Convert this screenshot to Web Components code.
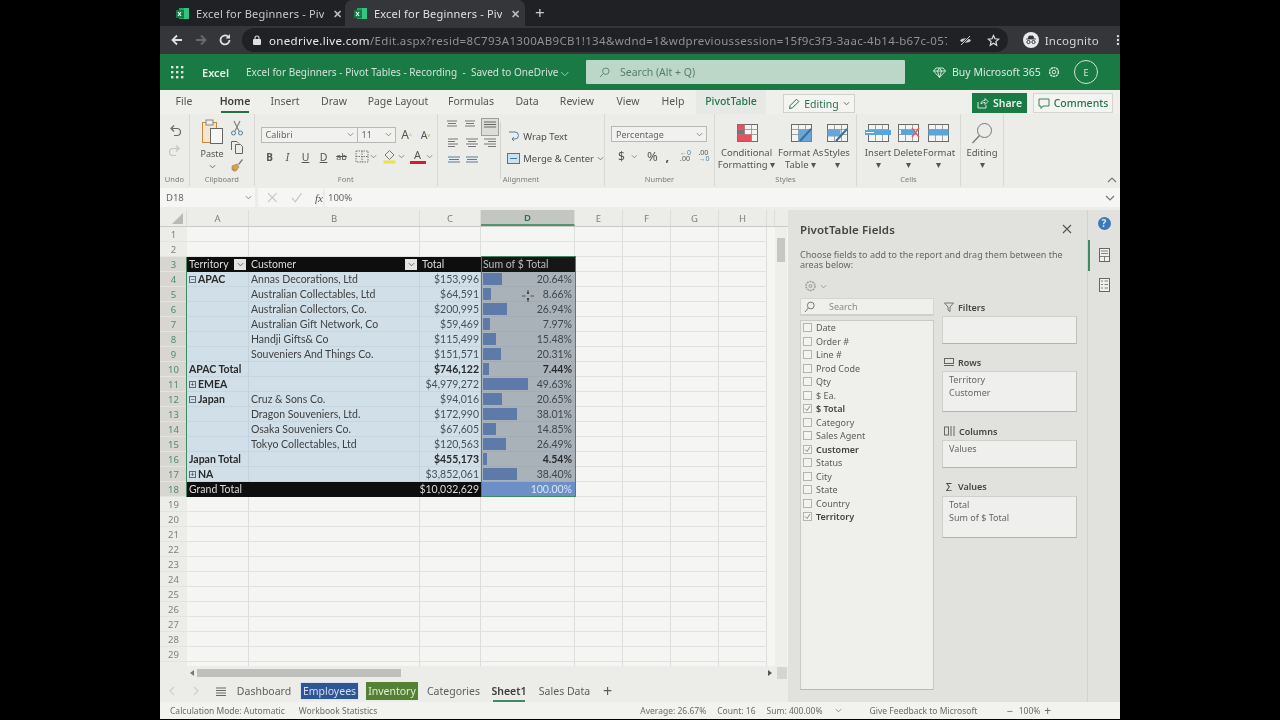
<!DOCTYPE html>
<html>
<head>
<meta charset="utf-8">
<title>Excel for Beginners - Pivot Tables</title>
<style>
  html, body { margin: 0; height: 100%; background: #000; overflow: hidden; }
  body { display: flex; justify-content: center; font-family: "Noto Sans", sans-serif; }
  #app { width: 960px; height: 719px; display: flex; flex-direction: column; background: #ecece9; filter: blur(.35px); }
  #main { display: flex; height: 492px; }
  #left { width: 628px; display: flex; flex-direction: column; }
</style>
</head>
<body>
<div id="app">
  <chrome-tabs></chrome-tabs>
  <chrome-toolbar></chrome-toolbar>
  <app-header></app-header>
  <ribbon-tabs></ribbon-tabs>
  <excel-ribbon></excel-ribbon>
  <formula-bar></formula-bar>
  <div id="main">
    <div id="left">
      <sheet-grid></sheet-grid>
      <sheet-tabs></sheet-tabs>
    </div>
    <pivot-panel></pivot-panel>
  </div>
  <status-bar></status-bar>
</div>
<script>
// shared icons
const favicon = `<svg width="13" height="13" viewBox="0 0 13 13"><rect x="3" y="1" width="10" height="11" fill="#21a366"/><rect x="8" y="1" width="5" height="11" fill="#33c481"/><rect x="0" y="3" width="8" height="8" fill="#107c41"/><path d="M2 5l3 4M5 5l-3 4" stroke="#fff" stroke-width="1.1"/></svg>`;
const chev = (c = "#777", s = 7) => `<svg width="${s}" height="${s}" viewBox="0 0 8 8"><path d="M1 2.5l3 3 3-3" fill="none" stroke="${c}" stroke-width="1.1"/></svg>`;
const lines = (arr, c = "#777") => `<svg width="14" height="12" viewBox="0 0 14 12">${arr.map((l, i) => `<path d="M${l[0]} ${1 + i * 2.5}H${l[1]}" stroke="${c}" stroke-width="1"/>`).join("")}</svg>`;
const tableIcon = (extra) => `<svg width="26" height="22" viewBox="0 0 26 22"><rect x="3.5" y="2.5" width="20" height="17" fill="#f4f4f2" stroke="#6b6b6b"/><path d="M3.5 7.5h20M3.5 12.5h20M10.5 2.5v17M17.5 2.5v17" stroke="#8d8d8d" stroke-width=".8"/>${extra}</svg>`;

class UiElement extends HTMLElement {
  connectedCallback() {
    if (this.shadowRoot) return;
    this.attachShadow({ mode: "open" });
    this.shadowRoot.innerHTML = `<style>${this.css()}</style>${this.html()}`;
  }
}

class ChromeTabs extends UiElement {
  css() {
    return `:host { display: flex; height: 26px; background: #202124; color: #c8c9cb; font-size: 11px; align-items: stretch; padding-left: 7px; flex: none; }
    .tab { width: 178px; display: flex; align-items: center; padding-left: 9px; box-sizing: border-box; gap: 7px; }
    .tab.on { background: #35363a; border-radius: 7px 7px 0 0; color: #dfe0e2; width: 180px; }
    .t { width: 128px; overflow: hidden; white-space: nowrap; letter-spacing: .2px; }
    .x { font-size: 11px; width: 12px; text-align: center; font-weight: 700; color: #bbb; }
    .plus { font-size: 17px; color: #c8c9cb; padding-left: 10px; line-height: 25px; }`;
  }
  html() {
    return `<div class="tab">${favicon}<span class="t">Excel for Beginners - Pivot</span><span class="x">✕</span></div>
    <div class="tab on">${favicon}<span class="t">Excel for Beginners - Pivot</span><span class="x">✕</span></div>
    <div class="plus">+</div>`;
  }
}

class ChromeToolbar extends UiElement {
  css() {
    return `:host { display: flex; height: 28px; background: #35363a; align-items: center; flex: none; position: relative; }
    .nav { width: 88px; display: flex; align-items: center; padding-left: 10px; box-sizing: border-box; gap: 10px; flex: none; }
    .omni { width: 780px; height: 24px; background: #202124; border-radius: 12px; display: flex; align-items: center; font-size: 11.5px; color: #8f9296; margin-left: -6px; padding-left: 11px; box-sizing: border-box; white-space: nowrap; letter-spacing: .33px; }
    .omni b { font-weight: 400; color: #e8e9ea; }
    .url { width: 678px; overflow: hidden; margin-left: 8px; }
    .end { display: flex; gap: 15px; margin-left: 12px; align-items: center; }
    .inc { display: flex; align-items: center; gap: 6px; color: #d5d6d8; font-size: 11.5px; margin-left: 15px; letter-spacing: .3px; }
    .dots { margin-left: 17px; }`;
  }
  html() {
    return `<div class="nav">
      <svg width="14" height="14" viewBox="0 0 14 14"><path d="M12 7H3M7 2.5L2.5 7 7 11.5" fill="none" stroke="#dfe0e2" stroke-width="1.8"/></svg>
      <svg width="14" height="14" viewBox="0 0 14 14"><path d="M2 7h9M7 2.5L11.5 7 7 11.5" fill="none" stroke="#6a6b6e" stroke-width="1.8"/></svg>
      <svg width="14" height="14" viewBox="0 0 14 14"><path d="M11.5 7A4.5 4.5 0 1 1 10 3.6" fill="none" stroke="#dfe0e2" stroke-width="1.8"/><path d="M12 1v4.5H7.5z" fill="#dfe0e2"/></svg>
    </div>
    <div class="omni">
      <svg width="8" height="10" viewBox="0 0 8 10"><rect y="4" width="8" height="6" rx="1" fill="#dfe0e2"/><path d="M2 4V3a2 2 0 0 1 4 0v1" fill="none" stroke="#dfe0e2" stroke-width="1.1"/></svg>
      <span class="url"><b>onedrive.live.com</b>/Edit.aspx?resid=8C793A1300AB9CB1!134&amp;wdnd=1&amp;wdprevioussession=15f9c3f3-3aac-4b14-b67c-057a2...</span>
      <span class="end">
        <svg width="13" height="13" viewBox="0 0 13 13"><path d="M1 6.5C3 3.5 10 3.5 12 6.5 10 9.5 3 9.5 1 6.5z" fill="#c8c9cb"/><path d="M2 11L11 2" stroke="#202124" stroke-width="2.4"/><path d="M2 11L11 2" stroke="#c8c9cb" stroke-width="1"/></svg>
        <svg width="13" height="13" viewBox="0 0 13 13"><path d="M6.5 1.5l1.5 3.3 3.6.4-2.7 2.4.8 3.6-3.2-1.9-3.2 1.9.8-3.6-2.7-2.4 3.6-.4z" fill="none" stroke="#dfe0e2" stroke-width="1.2"/></svg>
      </span>
    </div>
    <div class="inc">
      <svg width="16" height="16" viewBox="0 0 16 16"><circle cx="8" cy="8" r="8" fill="#e8e9ea"/><path d="M3 7h10M5 7l1-3h4l1 3" fill="#35363a" stroke="#35363a" stroke-width=".8"/><circle cx="5.5" cy="10" r="1.6" fill="none" stroke="#35363a"/><circle cx="10.5" cy="10" r="1.6" fill="none" stroke="#35363a"/></svg>
      Incognito
    </div>
    <svg class="dots" width="4" height="12" viewBox="0 0 4 12"><circle cx="2" cy="2" r="1.2" fill="#dfe0e2"/><circle cx="2" cy="6" r="1.2" fill="#dfe0e2"/><circle cx="2" cy="10" r="1.2" fill="#dfe0e2"/></svg>`;
  }
}

class AppHeader extends UiElement {
  css() {
    return `:host { display: flex; height: 36px; background: #1a7a43; color: #d4e7da; align-items: center; flex: none; font-size: 10px; white-space: nowrap; }
    .w { margin-left: 11px; width: 13px; height: 13px; }
    .app { font-size: 11px; font-weight: 600; margin-left: 18px; width: 44px; color: #e4f0e8; }
    .doc { width: 340px; letter-spacing: .02px; color: #cfe4d6; }
    .search { width: 319px; height: 24px; background: #bcd7c7; display: flex; align-items: center; color: #577f68; font-size: 10.5px; box-sizing: border-box; padding-left: 13px; gap: 10px; border-radius: 1px; }
    .buy { margin-left: 28px; display: flex; align-items: center; gap: 6px; width: 115px; color: #d9eadf; font-size: 10.5px; }
    .e { width: 22px; height: 22px; border: 1px solid #cfe4d6; border-radius: 50%; display: flex; align-items: center; justify-content: center; margin-left: 14px; font-size: 9px; }`;
  }
  html() {
    let dots = "";
    for (let y = 0; y < 3; y++) for (let x = 0; x < 3; x++) dots += `<rect x="${x * 5}" y="${y * 5}" width="2.4" height="2.4" fill="#d4e7da"/>`;
    return `<svg class="w" viewBox="0 0 13 13">${dots}</svg>
    <span class="app">Excel</span>
    <span class="doc">Excel for Beginners - Pivot Tables - Recording&nbsp; - &nbsp;Saved to OneDrive ⌵</span>
    <div class="search"><svg width="11" height="11" viewBox="0 0 11 11"><circle cx="6.8" cy="4.2" r="3.2" fill="none" stroke="#5f8a72"/><path d="M4.4 6.6L1 10" stroke="#5f8a72"/></svg>Search (Alt + Q)</div>
    <div class="buy"><svg width="13" height="11" viewBox="0 0 13 11"><path d="M3 1h7l2.5 3-6 6.5L.5 4zM.5 4h12M4.5 4L6.5 10.5 8.5 4 6.5 1 4.5 4" fill="none" stroke="#e0efe5" stroke-width=".9"/></svg>Buy Microsoft 365</div>
    <svg width="12" height="12" viewBox="0 0 12 12"><circle cx="6" cy="6" r="4.4" fill="none" stroke="#d4e7da" stroke-width="1.4" stroke-dasharray="2.2 .6"/><circle cx="6" cy="6" r="1.8" fill="none" stroke="#d4e7da"/></svg>
    <div class="e">E</div>`;
  }
}

class RibbonTabs extends UiElement {
  css() {
    return `:host { display: flex; height: 24px; background: #efefec; align-items: stretch; flex: none; font-size: 10.5px; color: #555; position: relative; white-space: nowrap; }
    .t { display: flex; align-items: center; justify-content: center; box-sizing: border-box; padding-bottom: 2px; position: relative; }
    .on { font-weight: 600; color: #3d3d3d; }
    .on::after { content: ""; position: absolute; left: 13px; right: 13px; bottom: 1px; height: 2px; background: #217346; }
    .pv { color: #26734a; background: #e6e9e5; font-weight: 500; }
    .edit { width: 72px; height: 19px; margin: 4px 0 0 17px; border: 1px solid #cfcfcc; background: #f4f4f2; box-sizing: border-box; display: flex; align-items: center; justify-content: center; gap: 4px; font-size: 10.5px; color: #26734a; }
    .share { width: 55px; height: 20px; margin: 3px 0 0 117px; background: #1a7a43; color: #e7f2ea; display: flex; align-items: center; justify-content: center; gap: 4px; font-weight: 600; }
    .com { width: 80px; height: 20px; margin: 3px 0 0 6px; border: 1px solid #d4d4d0; background: #f4f4f2; box-sizing: border-box; display: flex; align-items: center; justify-content: center; gap: 4px; color: #26734a; font-weight: 500; }`;
  }
  html() {
    const tabs = [["File", 48], ["Home", 54], ["Insert", 46], ["Draw", 52], ["Page Layout", 76], ["Formulas", 70], ["Data", 42], ["Review", 58], ["View", 44], ["Help", 46], ["PivotTable", 70]];
    return tabs.map(([t, w]) => `<div class="t ${t == "Home" ? "on" : ""} ${t == "PivotTable" ? "pv" : ""}" style="width:${w}px">${t}</div>`).join("") +
      `<div class="edit"><svg width="12" height="12" viewBox="0 0 12 12"><path d="M1.5 10.5l.7-3L8.5 1.2l2.3 2.3L4.5 9.8z" fill="none" stroke="#26734a"/></svg>Editing ${chev("#666")}</div>
      <div class="share"><svg width="12" height="12" viewBox="0 0 12 12"><path d="M1 5v6h8V8M4 7c0-3 2-3.500 4-3.500V1.500L11 4.500 8 7.500V5.500C6 5.500 5 6 4 7z" fill="none" stroke="#e7f2ea" stroke-width=".9"/></svg>Share</div>
      <div class="com"><svg width="12" height="11" viewBox="0 0 12 11"><path d="M1 1h10v7H5L3 10.500V8H1z" fill="none" stroke="#26734a" stroke-width=".9"/></svg>Comments</div>`;
  }
}

class RibbonGroup extends UiElement {
  css() {
    return `:host { display: flex; flex-direction: column; height: 72px; border-right: 1px solid #d8d8d5; box-sizing: border-box; flex: none; }
    .c { height: 60px; flex: none; }
    .l { text-align: center; font-size: 7.5px; line-height: 10px; color: #7b7b7b; padding-top: 0; }`;
  }
  html() {
    return `<div class="c"><slot></slot></div><div class="l">${this.getAttribute("label")}</div>`;
  }
}

class ExcelRibbon extends UiElement {
  css() {
    return `:host { display: flex; height: 72px; background: #ecece9; flex: none; position: relative; font-size: 9px; color: #555; white-space: nowrap; }
    ribbon-group { display: flex; }
    .col { display: flex; flex-direction: column; align-items: center; }
    .undo { gap: 6px; padding-top: 10px; }
    .clip { display: flex; padding: 5px 0 0 11px; gap: 7px; }
    .paste { width: 22px; font-size: 9px; }
    .paste span { margin: 3px 0 3px; }
    .clipb { gap: 4px; padding-top: 1px; }
    .font { padding: 12px 0 0 6px; display: flex; flex-direction: column; gap: 6px; }
    .r { display: flex; align-items: center; }
    .sel { height: 16px; border: 1px solid #b8b8b5; background: #f1f1ef; display: flex; align-items: center; justify-content: space-between; padding: 0 3px 0 4px; box-sizing: border-box; font-size: 9px; color: #666; }
    .g { width: 18px; text-align: center; font-size: 10.5px; color: #555; display: flex; align-items: center; justify-content: center; }
    .al { display: flex; padding: 4px 0 0 7px; }
    .algrid { display: grid; grid-template-columns: 18px 18px 18px; grid-auto-rows: 18px; place-items: center; width: 58px; }
    .algrid .box { border: 1px solid #9d9d9a; background: #dcdcd9; width: 18px; height: 18px; box-sizing: border-box; display: flex; align-items: center; justify-content: center; }
    .wm { border-left: 1px solid #d2d2cf; height: 50px; margin-top: 4px; padding: 7px 0 0 6px; font-size: 9.5px; display: flex; flex-direction: column; gap: 8px; color: #4d4d4d; }
    .wm .r { gap: 3px; height: 14px; }
    .num { padding: 12px 0 0 6px; display: flex; flex-direction: column; gap: 5px; }
    .big { width: 0; flex: 1; line-height: 12px; text-align: center; padding-top: 8px; font-size: 9.5px; }
    .bigs { display: flex; height: 100%; }
    .ic { height: 22px; display: flex; justify-content: center; margin-bottom: 3px; }
    .big small { font-size: 9px; display: block; }
    .up { position: absolute; right: 3px; bottom: 2px; }`;
  }
  html() {
    const clipI = `<svg width="22" height="25" viewBox="0 0 22 25"><rect x="1.500" y="3.500" width="14" height="20" fill="#f6e6cf" stroke="#c78a3c"/><rect x="5" y="1" width="7" height="5" fill="#eee" stroke="#888"/><rect x="9.500" y="9.500" width="12" height="15" fill="#f6f6f4" stroke="#666"/></svg>`;
    const b = (t, st = "") => `<span class="g" style="${st}">${t}</span>`;
    const a = [[[0, 10], [1, 9], [0, 10]], [[1, 9], [0, 10], [2, 8]], [[1, 11], [0, 12], [1, 11]]];
    const bars = { l: [[1, 11], [1, 8], [1, 11], [1, 8]], c: [[1, 13], [3, 11], [1, 13], [3, 11]], r: [[1, 13], [5, 13], [1, 13], [5, 13]], t: [[1, 13], [2, 12], [1, 13]] };
    return `<ribbon-group label="Undo" style="width:30px"><div class="col undo">
        <svg width="14" height="14" viewBox="0 0 14 14"><path d="M4 4.500h5a3.500 3.500 0 0 1 0 7H6M6 1.500L3 4.500l3 3" fill="none" stroke="#666" stroke-width="1.200"/></svg>
        <svg width="14" height="14" viewBox="0 0 14 14"><path d="M10 4.500H5a3.500 3.500 0 0 0 0 7h3M8 1.500l3 3-3 3" fill="none" stroke="#c3c3c0" stroke-width="1.200"/></svg>
      </div></ribbon-group>
      <ribbon-group label="Clipboard" style="width:64.500px"><div class="clip">
        <div class="col paste">${clipI}<span>Paste</span>${chev("#666")}</div>
        <div class="col clipb">
          <svg width="14" height="16" viewBox="0 0 14 16"><path d="M4 1l5 10M10 1L5 11" stroke="#7a7a78" stroke-width="1.100"/><circle cx="3.500" cy="13" r="2" fill="none" stroke="#4e7ea6"/><circle cx="10.500" cy="13" r="2" fill="none" stroke="#4e7ea6"/></svg>
          <svg width="14" height="14" viewBox="0 0 14 14"><path d="M1.500 10V1.500H7L9 3.500M5.500 4.500h5l2 2v7h-7z" fill="none" stroke="#666"/></svg>
          <svg width="14" height="14" viewBox="0 0 14 14"><path d="M8 6l4-5 1 1-4 5z" fill="#7a7a78"/><path d="M2 8l5-2 2 3-3 4H3l1-2-2 1z" fill="#d9a04e" stroke="#8a6a30" stroke-width=".5"/></svg>
        </div>
      </div></ribbon-group>
      <ribbon-group label="Font" style="width:183.500px"><div class="font">
        <div class="r">
          <div class="sel" style="width:97px">Calibri ${chev("#888")}</div>
          <div class="sel" style="width:38px;border-left:0">11 ${chev("#888")}</div>
          <span class="g" style="width:20px;margin-left:1px;font-size:12px">A<sup style="font-size:5px;color:#c49a3a">^</sup></span>
          <span class="g" style="width:18px;font-size:10.5px">A<sup style="font-size:5px;color:#c49a3a">v</sup></span>
        </div>
        <div class="r" style="margin-left:0">
          ${b("B", "font-weight:700;font-size:10px")}${b("I", "font-style:italic")}${b("U", "text-decoration:underline")}${b("D", "text-decoration:underline")}${b("ab", "text-decoration:line-through;font-size:9px")}
          <svg width="14" height="13" viewBox="0 0 14 13" style="margin:0 1px 0 4px"><rect x="1" y="1" width="12" height="11" fill="none" stroke="#777" stroke-dasharray="1.500 1"/><path d="M1 6.500h12M7 1v11" stroke="#777" stroke-dasharray="1.500 1"/></svg>${chev("#888")}
          <svg width="15" height="15" viewBox="0 0 15 15" style="margin:0 1px 0 5px"><path d="M7.500 1.500l4.500 4.500-4.500 4.500L3 6z" fill="none" stroke="#777"/><rect x="1.500" y="11.500" width="12" height="3" fill="#e8e24f"/></svg>${chev("#888")}
          <span class="g" style="width:16px;margin-left:5px;height:15px;border-bottom:3px solid #d0202a;line-height:12px;box-sizing:border-box;font-size:11px;color:#555">A</span>${chev("#888")}
        </div>
      </div></ribbon-group>
      <ribbon-group label="Alignment" style="width:167px"><div class="al">
        <div class="algrid">
          <span>${lines(a[0])}</span><span>${lines(a[0])}</span><span class="box">${lines([[1, 13], [1, 13], [1, 13]].slice(0, 3), "#666")}</span>
          <span>${lines(bars.l)}</span><span>${lines(bars.c)}</span><span>${lines(bars.r)}</span>
          <span>${lines(bars.t, "#4e7ea6")}</span><span>${lines(bars.t, "#4e7ea6")}</span>
        </div>
        <div class="wm">
          <div class="r"><svg width="13" height="14" viewBox="0 0 13 14"><path d="M2 3h6a3 3 0 0 1 0 7H5M7 8L5 10l2 2" fill="none" stroke="#4e7ea6"/></svg>Wrap Text</div>
          <div class="r"><svg width="13" height="13" viewBox="0 0 13 13"><rect x=".5" y="1.500" width="12" height="10" fill="#cfe0ee" stroke="#3a7ca8"/><path d="M3 6.500h7" stroke="#3a7ca8"/></svg>Merge &amp; Center ${chev("#777")}</div>
        </div>
      </div></ribbon-group>
      <ribbon-group label="Number" style="width:110px"><div class="num">
        <div class="sel" style="width:96px">Percentage ${chev("#888")}</div>
        <div class="r" style="padding-left:7px;font-size:12px;color:#555;gap:0">
          <span style="width:13px">$</span>${chev("#888")}<span style="width:27px;text-align:center;font-size:13px;margin-left:2px">%</span><span style="width:15px;font-weight:700;font-size:13px">,</span>
          <span style="width:19px;font-size:7px;color:#4e7ea6;line-height:6px">←0<br><span style="color:#555">.00</span></span><span style="width:16px;font-size:7px;color:#4e7ea6;line-height:6px"><span style="color:#555">.00</span><br>→0</span>
        </div>
      </div></ribbon-group>
      <ribbon-group label="Styles" style="width:142px"><div class="bigs">
        <div class="big" style="flex:0 0 63px"><div class="ic">${tableIcon('<rect x="3.500" y="2.500" width="7" height="5" fill="#e6505f"/><rect x="3.500" y="7.500" width="7" height="5" fill="#777"/><rect x="3.500" y="12.500" width="14" height="7" fill="#e6505f"/>')}</div>Conditional<br>Formatting ▾</div>
        <div class="big" style="flex:0 0 45px"><div class="ic">${tableIcon('<rect x="10.500" y="7.500" width="13" height="12" fill="#6aa5d6"/><path d="M12 19L23 7" stroke="#3a6f9c" stroke-width="2"/>')}</div>Format As<br>Table ▾</div>
        <div class="big" style="flex:0 0 28px"><div class="ic">${tableIcon('<rect x="3.500" y="7.500" width="13" height="7" fill="#6aa5d6"/><path d="M12 19L23 7" stroke="#3a6f9c" stroke-width="2"/>')}</div>Styles<br>▾</div>
      </div></ribbon-group>
      <ribbon-group label="Cells" style="width:104px"><div class="bigs" style="padding-left:6px">
        <div class="big" style="flex:0 0 30px"><div class="ic">${tableIcon('<rect x="0" y="8" width="26" height="5" fill="#58a6dc"/><path d="M1 10.500h8" stroke="#fff"/>')}</div>Insert<br>▾</div>
        <div class="big" style="flex:0 0 30px"><div class="ic">${tableIcon('<rect x="6" y="8" width="14" height="5" fill="#58a6dc"/><path d="M17 6l7 9M24 6l-7 9" stroke="#e0606a" stroke-width="1.500"/>')}</div>Delete<br>▾</div>
        <div class="big" style="flex:0 0 30px"><div class="ic">${tableIcon('<rect x="3.500" y="7.500" width="20" height="6" fill="#58a6dc"/>')}</div>Format<br>▾</div>
      </div></ribbon-group>
      <ribbon-group label="" style="width:43px"><div class="bigs">
        <div class="big"><div class="ic"><svg width="24" height="23" viewBox="0 0 24 23"><circle cx="14.500" cy="8.500" r="7" fill="none" stroke="#777"/><path d="M9.500 13.500L2.500 21" stroke="#777" stroke-width="1.300"/></svg></div>Editing<br>▾</div>
      </div></ribbon-group>
      <svg class="up" width="10" height="8" viewBox="0 0 10 8"><path d="M1 6l4-4 4 4" fill="none" stroke="#777" stroke-width="1.200"/></svg>`;
  }
}

class FormulaBar extends UiElement {
  css() {
    return `:host { display: flex; height: 19px; margin: 2px 0 3px; background: #f6f6f4; align-items: center; font-size: 9.5px; color: #666; flex: none; position: relative; }
    .name { width: 95px; height: 19px; display: flex; align-items: center; justify-content: space-between; padding: 0 3px 0 6px; box-sizing: border-box; }
    .btns { width: 70px; display: flex; align-items: center; gap: 13px; padding-left: 9px; box-sizing: border-box; color: #bdbdba; border-left: 3px solid #ecece9; height: 19px; border-right: 2px solid #ecece9; }
    .v { margin-left: 3px; flex: 1; }
    .dn { margin-right: 5px; }`;
  }
  html() {
    return `<div class="name">D18 ${chev("#888")}</div>
    <div class="btns">
      <svg width="11" height="11" viewBox="0 0 11 11"><path d="M1 1l9 9M10 1l-9 9" stroke="#c5c5c2" stroke-width="1.200"/></svg>
      <svg width="12" height="11" viewBox="0 0 12 11"><path d="M1 6l3.500 4L11 1" fill="none" stroke="#c5c5c2" stroke-width="1.200"/></svg>
      <span style="font-family:'Liberation Serif',serif;font-style:italic;color:#555;font-size:11px">fx</span>
    </div>
    <div class="v">100%</div>
    <svg class="dn" width="10" height="8" viewBox="0 0 10 8"><path d="M1 2l4 4 4-4" fill="none" stroke="#777" stroke-width="1.200"/></svg>`;
  }
}

const DATA = {
  3: { a: "Territory", f: 1, b: "Customer", c: "Total", d: "Sum of $ Total", head: 1 },
  4: { a: "APAC", t: "m", b: "Annas Decorations, Ltd", c: "$153,996", d: "20.64%", w: 19 },
  5: { b: "Australian Collectables, Ltd", c: "$64,591", d: "8.66%", w: 8 },
  6: { b: "Australian Collectors, Co.", c: "$200,995", d: "26.94%", w: 24 },
  7: { b: "Australian Gift Network, Co", c: "$59,469", d: "7.97%", w: 7 },
  8: { b: "Handji Gifts& Co", c: "$115,499", d: "15.48%", w: 13 },
  9: { b: "Souveniers And Things Co.", c: "$151,571", d: "20.31%", w: 18 },
  10: { a: "APAC Total", bold: 1, c: "$746,122", d: "7.44%", w: 6 },
  11: { a: "EMEA", t: "p", c: "$4,979,272", d: "49.63%", w: 45 },
  12: { a: "Japan", t: "m", b: "Cruz & Sons Co.", c: "$94,016", d: "20.65%", w: 19 },
  13: { b: "Dragon Souveniers, Ltd.", c: "$172,990", d: "38.01%", w: 34 },
  14: { b: "Osaka Souveniers Co.", c: "$67,605", d: "14.85%", w: 13 },
  15: { b: "Tokyo Collectables, Ltd", c: "$120,563", d: "26.49%", w: 23 },
  16: { a: "Japan Total", bold: 1, c: "$455,173", d: "4.54%", w: 4 },
  17: { a: "NA", t: "p", c: "$3,852,061", d: "38.40%", w: 34 },
  18: { a: "Grand Total", c: "$10,032,629", d: "100.00%", total: 1 }
};

class SheetGrid extends UiElement {
  css() {
    const cols = "27px 62px 171px 61px 94px 48px 48px 48px 48px 8px";
    return `:host { display: flex; flex-direction: column; height: 470px; position: relative; flex: none; background: #ecece9; font-size: 9.5px; color: #7d7d7d; }
    .hdr { display: grid; grid-template-columns: ${cols}; height: 17px; flex: none; background: #ecece9; border-bottom: 1px solid #c9c9c6; box-sizing: border-box; }
    .hdr div { display: flex; align-items: center; justify-content: center; padding-top: 0; border-right: 1px solid #dcdcd9; box-sizing: border-box; }
    .hdr .sel { background: #c4c6c1; border-bottom: 2px solid #53936f; color: #31704c; font-weight: 600; height: 16px; }
    .body { height: 439px; overflow: hidden; background: #f5f5f3; }
    .row { display: grid; grid-template-columns: ${cols}; height: 15px; font-family: Lato, sans-serif; font-size: 10.5px; color: #3f3f3f; white-space: nowrap; }
    .row > div { border-right: 1px solid #dedede; border-bottom: 1px solid #e1e1de; box-sizing: border-box; display: flex; align-items: center; overflow: visible; min-width: 0; padding: 0 2px; }
    .row .rh { background: #ecece9; color: #808080; justify-content: center; font-size: 9.5px; font-family: "Noto Sans", sans-serif; border-right: 0; border-bottom-color: #e3e3e0; padding: 0; }
    .row.inpv .rh { background: #d8d6d0; color: #4f8b68; }
    .row .blank { border-color: transparent; }
    .pv { background: #d1dfe9; border-bottom-color: #c7d5df !important; border-right-color: #c3d2dc !important; }
    .row .c { justify-content: flex-end; color: #45505a; padding-right: 1px; }
    .row .d { background: #a9b2b9; justify-content: flex-end; position: relative; border-right-color: #a9b2b9 !important; border-bottom-color: #a3acb3 !important; color: #3f464c; }
    .bar { position: absolute; left: 2px; top: 1px; bottom: 1px; background: #5d7aa8; }
    .d span { position: relative; }
    .bold { font-weight: 700; color: #2a2a2a !important; }
    .blk, .row .blk { background: #0e0e0e !important; color: #dcdcdc !important; border-color: #0e0e0e !important; }
    .row .d.tot { background: #6c8fc8 !important; color: #d9e6f7 !important; border-color: #6c8fc8 !important; }
    .row .d.hd { background: #161616 !important; color: #b9bbbb !important; border-color: #161616 !important; justify-content: flex-start; }
    .a2 { padding-left: 2px; }
    .fb { margin-left: auto; width: 12px; height: 11px; background: #e4e4e2; flex: none; display: flex; align-items: center; justify-content: center; margin-right: 0; }
    .tg { width: 7px; height: 7px; border: 1px solid #5a6a76; box-sizing: border-box; margin: 0 2px 0 0; font: 400 7px/5px "Liberation Sans", sans-serif; text-align: center; color: #333; flex: none; }
    .hscroll { height: 14px; display: flex; align-items: center; background: #ecece9; position: relative; flex: none; }
    .thumb { width: 204px; height: 8px; background: #bfbfbc; margin-left: 3px; }
    .hscroll .lft { margin-left: 30px; }
    .hscroll .rgt { margin-left: auto; margin-right: 5px; }
    .sq { width: 10px; height: 12px; background: #d5d5d2; margin-right: 1px; }
    .vs { position: absolute; left: 615px; top: 17px; width: 12px; height: 439px; background: #eeeeeb; display: flex; flex-direction: column; align-items: center; }
    .vs i { display: block; width: 8px; height: 24px; background: #c6c6c3; margin-top: 11px; }
    .frame { position: absolute; border: 1.5px solid #3f8a62; box-sizing: border-box; pointer-events: none; }
    .corner { position: absolute; left: 12px; top: 3px; width: 0; height: 0; border-left: 11px solid transparent; border-bottom: 11px solid #b9b9b6; }
    .cursor { position: absolute; left: 361px; top: 79px; }`;
  }
  html() {
    const heads = ["", "A", "B", "C", "D", "E", "F", "G", "H", ""];
    const toggle = (t) => `<span class="tg">${t == "m" ? "−" : "+"}</span>`;
    const filter = `<span class="fb">${chev("#666")}</span>`;
    let rows = "";
    for (let n = 1; n <= 30; n++) {
      const r = DATA[n];
      const tail = `<div class="blank"></div>`.repeat(0) + `<div></div><div></div><div></div><div></div><div class="blank"></div>`;
      if (!r) {
        rows += `<div class="row"><div class="rh">${n}</div><div></div><div></div><div></div><div></div>${tail}</div>`;
        continue;
      }
      const blk = r.head || r.total ? "blk" : "pv";
      const bold = r.bold || r.t ? "bold" : "";
      const dClass = r.head ? "hd" : r.total ? "tot" : "";
      rows += `<div class="row inpv"><div class="rh">${n}</div>
        <div class="${blk} ${bold} a2">${r.t ? toggle(r.t) : ""}${r.a || ""}${r.f ? filter : ""}</div>
        <div class="${blk}"><span>${(r.b || "").replace("&", "&amp;")}</span>${r.head ? filter : ""}</div>
        <div class="${blk} c ${r.bold ? "bold" : ""}" style="${r.head ? "justify-content:flex-start;padding-left:2px" : ""}">${r.c}</div>
        <div class="d ${dClass} ${r.bold ? "bold" : ""}">${r.w ? `<i class="bar" style="width:${r.w}px"></i>` : ""}<span>${r.d}</span></div>
        ${tail}</div>`;
    }
    return `<div class="hdr">${heads.map((h) => `<div class="${h == "D" ? "sel" : ""}">${h}</div>`).join("")}</div>
    <div class="corner"></div>
    <div class="body">${rows}</div>
    <div class="hscroll"><svg class="lft" width="4" height="6" viewBox="0 0 4 6"><path d="M4 0L0 3l4 3z" fill="#777"/></svg><span class="thumb"></span><svg class="rgt" width="4" height="6" viewBox="0 0 4 6"><path d="M0 0l4 3-4 3z" fill="#555"/></svg><span class="sq"></span></div>
    <div class="vs"><i></i></div>
    <div class="frame" style="left:26px;top:47px;width:296px;height:240px;border-right:0;border-top:0;border-bottom:0"></div>
    <div class="frame" style="left:321px;top:46px;width:95px;height:241px"></div>
    <svg class="cursor" width="14" height="14" viewBox="0 0 14 14"><path d="M7 1v4M7 9v4M1 7h3.500M9.500 7H13" stroke="#555" stroke-width="1.200"/><path d="M7 3v2M7 9v2" stroke="#222" stroke-width="1.200"/></svg>`;
  }
}

class SheetTabs extends UiElement {
  css() {
    return `:host { display: flex; height: 22px; align-items: center; background: #ecece9; font-size: 10.5px; color: #5d5d5d; flex: none; position: relative; white-space: nowrap; }
    .nav { width: 79px; display: flex; align-items: center; gap: 18px; padding-left: 9px; box-sizing: border-box; flex: none; }
    .s { height: 18px; display: flex; align-items: center; justify-content: center; box-sizing: border-box; flex: none; }
    .emp { background: #2f5597; color: #d6dff0; border: 1px solid #d8e2ef; }
    .inv { background: #548235; color: #e0ecd6; }
    .cur { font-weight: 600; color: #3c3c3c; position: relative; }
    .cur::after { content: ""; position: absolute; left: 0; right: 0; bottom: -2px; height: 2px; background: #3f8a62; }
    .plus { font-size: 16px; margin-left: 14px; line-height: 18px; }`;
  }
  html() {
    const arrow = (p) => `<svg width="6" height="10" viewBox="0 0 6 10"><path d="${p}" fill="none" stroke="#cfcfcc" stroke-width="1.200"/></svg>`;
    return `<div class="nav">${arrow("M5 1L1 5l4 4")}${arrow("M1 1l4 4-4 4")}<svg width="10" height="9" viewBox="0 0 10 9" style="margin-left:-1px"><path d="M0 1h10M0 3.500h10M0 6h10M0 8.500h10" stroke="#666"/></svg></div>
    <div class="s" style="width:50px;margin-right:11px">Dashboard</div>
    <div class="s emp" style="width:59px;margin-right:7px">Employees</div>
    <div class="s inv" style="width:52px;margin-right:11px">Inventory</div>
    <div class="s" style="width:49px;margin-right:15px">Categories</div>
    <div class="s cur" style="width:32px;margin-right:15px">Sheet1</div>
    <div class="s" style="width:49px">Sales Data</div>
    <div class="plus">+</div>`;
  }
}

class PivotPanel extends UiElement {
  css() {
    return `:host { display: flex; width: 332px; height: 492px; background: #e1e1dd; color: #5c5c5c; font-size: 9px; flex: none; }
    .pane { width: 300px; padding: 0 0 0 12px; box-sizing: border-box; border-right: 1px solid #d2d2cf; }
    .top { display: flex; align-items: center; justify-content: space-between; height: 40px; padding: 0 15px 2px 0; color: #444; font-size: 11.500px; font-weight: 600; box-sizing: border-box; letter-spacing: .1px; }
    .desc { line-height: 10px; width: 280px; font-size: 9px; height: 24px; padding-top: 0; color: #666; }
    .gear { height: 24px; display: flex; align-items: center; gap: 3px; padding-left: 4px; }
    .cols { display: flex; gap: 8px; height: 392px; }
    .l { width: 134px; }
    .search { height: 18px; border: 1px solid #d4d4d1; border-bottom: 2px solid #cfcfcc; background: #efefec; display: flex; align-items: center; gap: 14px; padding-left: 3px; box-sizing: border-box; color: #8a8a8a; margin-bottom: 4px; }
    .fields { height: 370px; border: 1px solid #c9c9c6; background: #efefec; box-sizing: border-box; padding: 0 0 0 2px; border-bottom: 1px solid #b9b9b6; }
    .f { height: 13.500px; display: flex; align-items: center; gap: 4px; }
    .f:first-child { margin-top: 0; }
    .f b { font-weight: 600; color: #444; }
    .cb { width: 9px; height: 9px; border: 1px solid #b4b4b1; background: #f3f3f1; box-sizing: border-box; flex: none; position: relative; }
    .r { width: 135px; }
    .sec { display: flex; align-items: center; gap: 4px; height: 18px; font-weight: 600; color: #444; padding-left: 2px; }
    .box { border: 1px solid #d0d0cd; border-bottom: 1.500px solid #b3b3b0; border-right: 1px solid #c0c0bd; background: #efefed; padding: 1px 6px; line-height: 13px; box-sizing: border-box; color: #666; }
    .side { width: 32px; display: flex; flex-direction: column; align-items: center; position: relative; }
    .side .q { width: 13px; height: 13px; border-radius: 50%; background: #3a7ab8; color: #dbe8f5; font-weight: 700; font-size: 10px; text-align: center; line-height: 13px; margin-top: 7px; }
    .side .bar { position: absolute; left: 0; top: 30px; width: 2px; height: 31px; background: #3f8a62; }`;
  }
  html() {
    const fields = [["Date"], ["Order #"], ["Line #"], ["Prod Code"], ["Qty"], ["$ Ea."], ["$ Total", 1], ["Category"], ["Sales Agent"], ["Customer", 1], ["Status"], ["City"], ["State"], ["Country"], ["Territory", 1]];
    return `<div class="pane">
      <div class="top">PivotTable Fields <svg width="10" height="10" viewBox="0 0 10 10"><path d="M1 1l8 8M9 1l-8 8" stroke="#555" stroke-width="1.100"/></svg></div>
      <div class="desc">Choose fields to add to the report and drag them between the areas below:</div>
      <div class="gear"><svg width="13" height="12" viewBox="0 0 13 12"><circle cx="6.500" cy="6" r="4.500" fill="none" stroke="#9a9a98" stroke-width="1.400" stroke-dasharray="2 .8"/><circle cx="6.500" cy="6" r="1.500" fill="none" stroke="#9a9a98"/></svg>${chev("#999")}</div>
      <div class="cols">
        <div class="l">
          <div class="search"><svg width="11" height="12" viewBox="0 0 11 12"><circle cx="6.800" cy="4.500" r="3.400" fill="none" stroke="#777"/><path d="M4.300 7L1 11" stroke="#777"/></svg>Search</div>
          <div class="fields" style="padding-top:0">${fields.map(([n, on]) => `<div class="f"><span class="cb">${on ? `<svg width="7" height="7" viewBox="0 0 7 7" style="display:block"><path d="M1 3.500l2 2 3-4.500" fill="none" stroke="#888"/></svg>` : ""}</span>${on ? `<b>${n}</b>` : n}</div>`).join("")}</div>
        </div>
        <div class="r">
          <div class="sec"><svg width="10" height="10" viewBox="0 0 10 10"><path d="M.500 1h9L6 5v4.500L4 8V5z" fill="none" stroke="#666" stroke-width=".9"/></svg>Filters</div>
          <div class="box" style="height:28px;margin-bottom:9px"></div>
          <div class="sec"><svg width="10" height="10" viewBox="0 0 10 10"><rect x=".500" y="1.500" width="9" height="5" fill="none" stroke="#666"/><path d="M0 8.500h10" stroke="#666"/></svg>Rows</div>
          <div class="box" style="height:41px;margin-bottom:10px">Territory<br>Customer</div>
          <div class="sec"><svg width="11" height="10" viewBox="0 0 11 10"><rect x=".500" y="1" width="4" height="8" fill="none" stroke="#666"/><path d="M7 0v10M10 0v10" stroke="#666"/></svg>Columns</div>
          <div class="box" style="height:28px;margin-bottom:9px">Values</div>
          <div class="sec" style="margin-bottom:1px"><span style="font-size:11px;font-weight:400;width:10px;text-align:center">Σ</span>Values</div>
          <div class="box" style="height:42px">Total<br>Sum of $ Total</div>
        </div>
      </div>
    </div>
    <div class="side">
      <span class="bar"></span>
      <div class="q">?</div>
      <svg style="margin-top:18px" width="11" height="14" viewBox="0 0 11 14"><rect x=".500" y=".500" width="10" height="13" fill="#f0f0ee" stroke="#666"/><path d="M2 3h7M2 5.500h7M.500 8.500h10M5.500 8.500v5" stroke="#666" stroke-width=".8"/></svg>
      <svg style="margin-top:16px" width="11" height="14" viewBox="0 0 11 14"><rect x=".500" y=".500" width="10" height="13" fill="#f0f0ee" stroke="#666"/><path d="M2 3h2M5.500 3H9M2 6.500h2M5.500 6.500H9M2 10h2M5.500 10H9" stroke="#666" stroke-width=".8"/></svg>
    </div>`;
  }
}

class StatusBar extends UiElement {
  css() {
    return `:host { display: flex; height: 17px; background: #f2f2ef; font-size: 8.500px; color: #6a6a6a; align-items: center; flex: none; padding-left: 10px; white-space: nowrap; }
    .a { margin-right: 14px; }
    .r { margin-left: 263px; display: flex; align-items: center; }`;
  }
  html() {
    return `<span class="a">Calculation Mode: Automatic</span><span>Workbook Statistics</span>
    <div class="r">
      <span style="margin-right:11px">Average: 26.67%</span><span style="margin-right:11px">Count: 16</span><span style="margin-right:12px">Sum: 400.00%</span>${chev("#888")}
      <span style="margin-left:28px">Give Feedback to Microsoft</span>
      <span style="margin-left:29px;font-size:11px;margin-right:6px">−</span><span>100%</span><span style="margin-left:4px;font-size:12px">+</span>
    </div>`;
  }
}

const defs = { "chrome-tabs": ChromeTabs, "chrome-toolbar": ChromeToolbar, "app-header": AppHeader, "ribbon-tabs": RibbonTabs, "ribbon-group": RibbonGroup, "excel-ribbon": ExcelRibbon, "formula-bar": FormulaBar, "sheet-grid": SheetGrid, "sheet-tabs": SheetTabs, "pivot-panel": PivotPanel, "status-bar": StatusBar };
for (const [name, cls] of Object.entries(defs)) customElements.define(name, cls);
</script>
</body>
</html>
